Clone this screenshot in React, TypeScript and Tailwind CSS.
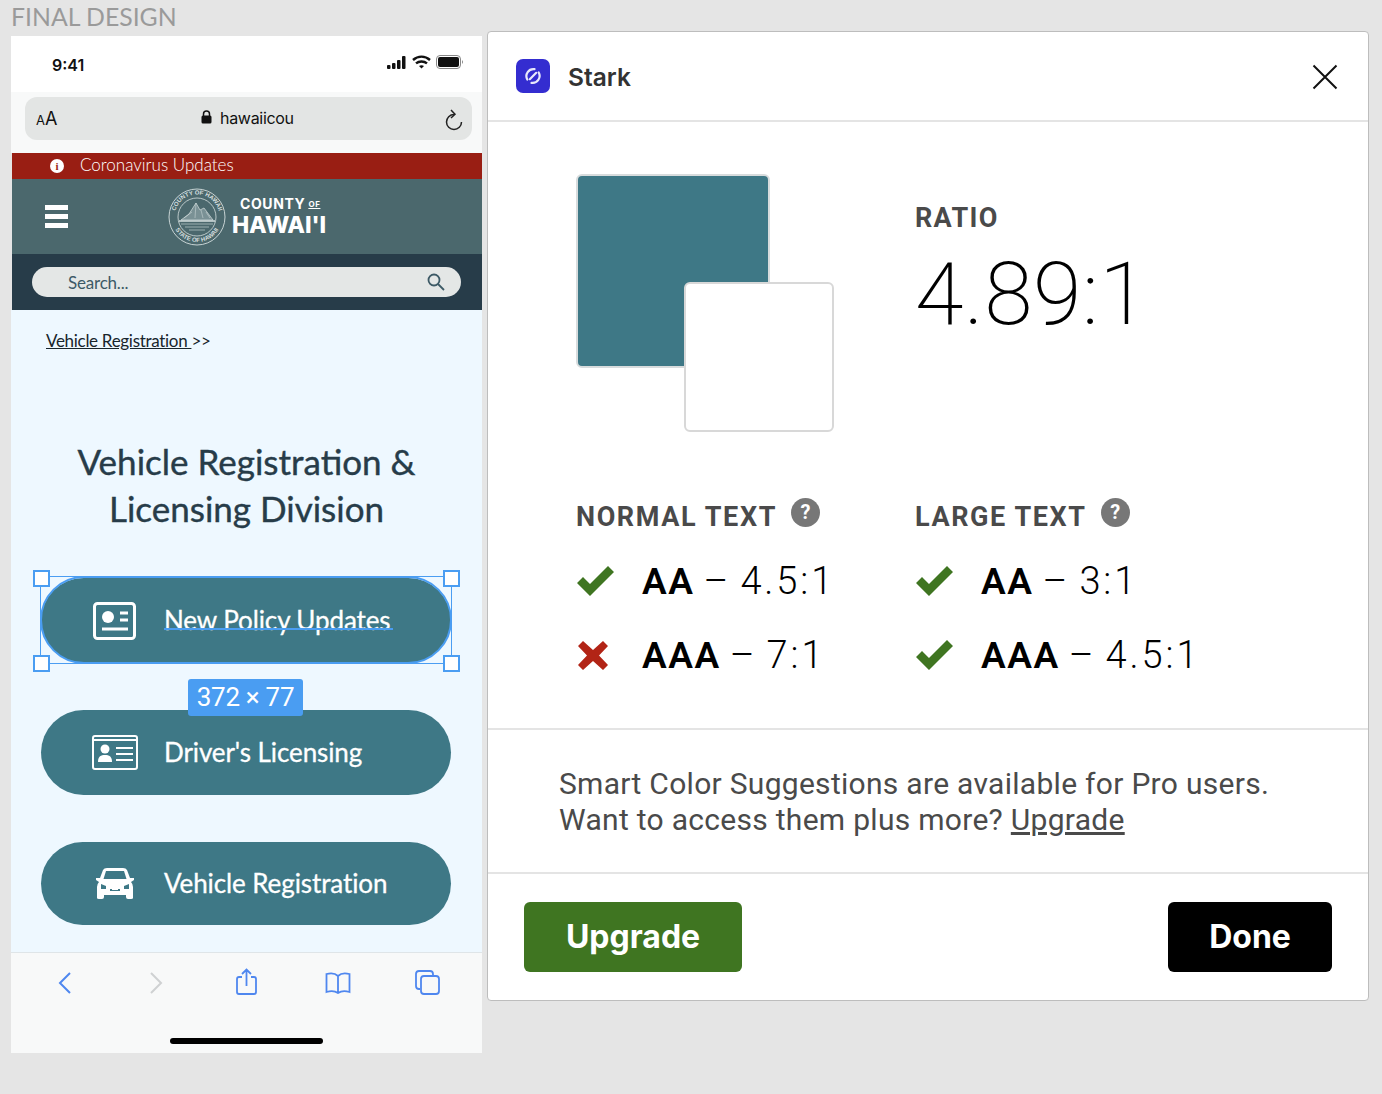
const Check = () => (
  <svg width="39" height="31" viewBox="0 0 39 31" className="shrink-0">
    <path d="M1 17 L7 11 L14 18 L32 0 L38 6 L14 30 Z" fill="#3f7521" />
  </svg>
)

const Cross = () => (
  <svg width="39" height="31" viewBox="0 0 39 31" className="shrink-0">
    <path d="M2 6 L7 1 L17 10 L27 1 L32 6 L23 15.500 L32 25 L27 30 L17 21 L7 30 L2 25 L11 15.500 Z" fill="#b22416" />
  </svg>
)

const Help = () => (
  <span className="flex h-[29px] w-[29px] items-center justify-center rounded-full bg-[#777777] font-['Roboto',sans-serif] text-[20px] font-bold text-white">
    ?
  </span>
)

const Seal = () => (
  <svg width="58" height="58" viewBox="0 0 58 58" fill="none" stroke="#d5dfdf">
    <defs>
      <path id="seal-top" d="M6.500 29 A22.500 22.500 0 0 1 51.500 29" />
      <path id="seal-bottom" d="M4 29 A25 25 0 0 0 54 29" />
    </defs>
    <circle cx="29" cy="29" r="28" strokeWidth="0.900" />
    <circle cx="29" cy="29" r="19" strokeWidth="0.800" />
    <text fontSize="6" fontWeight="700" fill="#d5dfdf" stroke="none" fontFamily="Liberation Sans, sans-serif">
      <textPath href="#seal-top" startOffset="50%" textAnchor="middle">COUNTY OF HAWAII</textPath>
    </text>
    <text fontSize="6" fontWeight="700" fill="#d5dfdf" stroke="none" fontFamily="Liberation Sans, sans-serif">
      <textPath href="#seal-bottom" startOffset="50%" textAnchor="middle">STATE OF HAWAII</textPath>
    </text>
    <path d="M13 32 L21 26 L28 15 L32 22 L36 20 L45 32 Z" fill="#d5dfdf" fillOpacity="0.350" strokeWidth="0.700" />
    <path d="M16 30 L24 24 M28 15 L27 30 M33 22 L35 30 M38 24 L42 30" strokeWidth="0.500" />
    <path d="M11 33 H47" strokeWidth="1.400" />
    <path d="M13 36 H45 M17 39 H41 M21 42 H37" strokeWidth="0.600" />
  </svg>
)

const PolicyIcon = () => (
  <svg width="44" height="38" viewBox="0 0 44 38" fill="none">
    <rect x="1.500" y="1.500" width="40" height="35" rx="3" stroke="white" strokeWidth="3" />
    <circle cx="15" cy="15" r="6" fill="white" />
    <path d="M27 11 H35 M27 18 H35 M9 27 H35" stroke="white" strokeWidth="3" />
  </svg>
)

const LicenseIcon = () => (
  <svg width="46" height="35" viewBox="0 0 46 35" fill="none">
    <rect x="1" y="1" width="44" height="33" rx="2" stroke="white" strokeWidth="2" />
    <path d="M1 5 H45" stroke="white" strokeWidth="2" />
    <circle cx="13" cy="14" r="4.500" fill="white" />
    <path d="M6 27 C6 21 9 20 13 20 C17 20 20 21 20 27 Z" fill="white" />
    <path d="M24 13 H41 M24 19 H41 M24 25 H41" stroke="white" strokeWidth="2" />
  </svg>
)

const CarIcon = () => (
  <svg width="40" height="33" viewBox="0 0 40 33">
    <path
      fillRule="evenodd"
      fill="white"
      d="M8 3 Q9 1 12 1 H28 Q31 1 32 3 L35 11 H39 V13 L36 15 Q38 17 38 20 V31 Q38 32 36 32 H33 Q31 32 31 30 V28 H9 V30 Q9 32 7 32 H4 Q2 32 2 31 V20 Q2 17 4 15 L1 13 V11 H5 Z M11 4 L8.500 12 H31.500 L29 4 Z M6 17 V22 H11 V19 Z M34 17 V22 H29 V19 Z M15 22 V24 H25 V22 H23 V23 H17 V22 Z"
    />
  </svg>
)

const PhoneButton = ({ icon, label, className }: { icon: React.ReactNode; label: string; className: string }) => (
  <div className={`flex w-[410px] items-center rounded-full bg-[#3e7886] ${className}`}>
    <div className="flex w-[123px] shrink-0 justify-center pl-[25px]">{icon}</div>
    <span className="mb-[1px] text-[26px] tracking-[-0.1px] text-white [-webkit-text-stroke:0.3px_white]">{label}</span>
  </div>
)

const Handle = ({ className }: { className: string }) => (
  <span className={`absolute h-[17px] w-[17px] border-[2px] border-[#4a9df2] bg-white ${className}`} />
)

const Phone = () => (
  <div className="flex h-[1017px] w-[471px] flex-col font-['Lato',sans-serif]">
    {/* status bar */}
    <div className="flex h-[56px] items-center justify-between bg-white pl-[41px] pr-[18px]">
      <span className="mt-[2px] font-['Inter',sans-serif] text-[16px] font-semibold text-[#111]">9:41</span>
      <div className="mb-[4px] flex items-center gap-[5px]">
        <svg width="20" height="13" viewBox="0 0 20 13" fill="#111">
          <rect x="0" y="9" width="3.500" height="4" rx="1" />
          <rect x="5" y="7" width="3.500" height="6" rx="1" />
          <rect x="10" y="4" width="3.500" height="9" rx="1" />
          <rect x="15" y="0" width="3.500" height="13" rx="1" />
        </svg>
        <svg width="19" height="14" viewBox="0 0 19 14" fill="none" stroke="#111" strokeWidth="2.400">
          <path d="M1 5 C6 0.500 13 0.500 18 5 M4 8.300 C7 5.800 12 5.800 15 8.300" />
          <path d="M7 11 L9.500 13.500 L12 11 C10.500 10 8.500 10 7 11 Z" fill="#111" stroke="none" />
        </svg>
        <svg width="28" height="14" viewBox="0 0 28 14">
          <rect x="0.500" y="0.500" width="24" height="13" rx="3.500" fill="none" stroke="#888" />
          <rect x="2" y="2" width="21" height="10" rx="2" fill="#111" />
          <path d="M26 5 Q28 7 26 9 Z" fill="#888" />
        </svg>
      </div>
    </div>

    {/* address bar */}
    <div className="flex h-[61px] items-start bg-[#f8f9f9] pl-[14px] pr-[10px] pt-[5px]">
      <div className="flex h-[43px] w-full items-center rounded-[12px] bg-[#e3e5e4] pl-[11px] pr-[8px]">
        <span className="w-[165px] text-[#111] font-['Inter',sans-serif]">
          <span className="text-[13px]">A</span>
          <span className="text-[18px]">A</span>
        </span>
        <svg width="11" height="14" viewBox="0 0 11 14" className="mb-[4px]">
          <path d="M2.500 6 V4 A3 3 0 0 1 8.500 4 V6" fill="none" stroke="#111" strokeWidth="1.500" />
          <rect x="0.500" y="5.500" width="10" height="8" rx="1.500" fill="#111" />
        </svg>
        <span className="mb-[2px] ml-[8px] flex-1 font-['Inter',sans-serif] text-[16px] tracking-[-0.3px] text-[#111]">hawaiicou</span>
        <svg width="20" height="24" viewBox="0 0 20 24" fill="none" stroke="#222" strokeWidth="1.500" className="mt-[2px]">
          <path d="M17.500 14 A7.500 7.500 0 1 1 10 6.500" />
          <path d="M7 2 L11 6.300 L7 10" />
        </svg>
      </div>
    </div>

    {/* corona banner */}
    <div className="ml-[1px] flex h-[26px] items-center bg-[#991e13] pl-[38px] text-white">
      <span className="flex h-[14px] w-[14px] items-center justify-center rounded-full bg-white font-['Liberation_Serif',serif] text-[11px] font-bold text-[#991e13]">
        i
      </span>
      <span className="mb-[2px] ml-[16px] text-[17px] font-light">Coronavirus Updates</span>
    </div>

    {/* county header */}
    <div className="ml-[1px] flex h-[75px] items-center bg-[#4b686d] pl-[33px]">
      <div className="flex w-[23px] flex-col gap-[4px]">
        <span className="h-[5px] bg-white" />
        <span className="h-[5px] bg-white" />
        <span className="h-[5px] bg-white" />
      </div>
      <div className="ml-[100px]">
        <Seal />
      </div>
      <div className="ml-[6px] flex flex-col items-start text-white">
        <div className="flex items-center pl-[8px] font-['Inter',sans-serif] text-[14px] font-bold leading-[16px] tracking-[0.6px]">
          COUNTY <span className="ml-[3px] text-[8px] underline">OF</span>
        </div>
        <div className="font-['Inter',sans-serif] text-[23px] font-extrabold leading-[26px] tracking-[-0.1px]">HAWAI'I</div>
      </div>
    </div>

    {/* search */}
    <div className="ml-[1px] flex h-[56px] items-center bg-[#273c49] pl-[20px] pr-[21px]">
      <div className="flex h-[30px] w-full items-center justify-between rounded-full bg-[#e4e7e6] pl-[36px] pr-[16px]">
        <span className="mt-[2px] text-[17px] tracking-[-0.2px] text-[#3d5a66]">Search...</span>
        <svg width="18" height="18" viewBox="0 0 18 18" fill="none" stroke="#3d5a66" strokeWidth="1.800">
          <circle cx="7" cy="7" r="5.500" />
          <path d="M11 11 L17 17" />
        </svg>
      </div>
    </div>

    {/* page body */}
    <div className="flex h-[642px] flex-col bg-[#eef8ff]">
      <div className="pl-[35px] pt-[21px] text-[17px] leading-[20px] tracking-[-0.3px] text-[#18252c]">
        <span className="underline">Vehicle Registration </span>
        <span>&gt;&gt;</span>
      </div>
      <h1 className="mt-[87px] text-center text-[35px] leading-[47px] text-[#273c49] [-webkit-text-stroke:0.4px_#273c49]">
        Vehicle Registration &amp;
        <br />
        Licensing Division
      </h1>
      <div className="mt-[46px] flex flex-col pl-[30px]">
        <div className="relative">
          <PhoneButton icon={<PolicyIcon />} label="New Policy Updates" className="h-[85px]" />
          <span className="absolute left-[123px] top-[50px] h-[2px] w-[229px] bg-[#4a9df2]" />
          {/* selection frame */}
          <span className="absolute left-[-1px] top-[-2px] h-[88px] w-[412px] rounded-[44px] border-[2px] border-[#4a9df2]" />
          <span className="absolute left-[-1px] top-[-2px] h-[88px] w-[412px] border-[1px] border-[#4a9df2]" />
          <Handle className="left-[-8px] top-[-8px]" />
          <Handle className="left-[402px] top-[-8px]" />
          <Handle className="left-[-8px] top-[77px]" />
          <Handle className="left-[402px] top-[77px]" />
          <span className="absolute left-[147px] top-[101px] z-10 flex h-[37px] w-[115px] items-center justify-center rounded-[3px] bg-[#4a9df2] font-['Roboto',sans-serif] text-[26px] tracking-[-0.3px] text-white">
            372 × 77
          </span>
        </div>
        <PhoneButton icon={<LicenseIcon />} label="Driver's Licensing" className="mt-[47px] h-[85px]" />
        <PhoneButton icon={<CarIcon />} label="Vehicle Registration" className="mt-[47px] h-[83px]" />
      </div>
    </div>

    {/* safari toolbar */}
    <div className="relative flex h-[101px] items-start border-t border-[#dfe5e8] bg-[#f8f9f9] pl-[47px] pt-[15px]">
      <svg width="13" height="22" viewBox="0 0 13 22" fill="none" stroke="#4f87ef" strokeWidth="2" className="mt-[4px]">
        <path d="M12 1 L2 11 L12 21" />
      </svg>
      <svg width="13" height="22" viewBox="0 0 13 22" fill="none" stroke="#cfd1d2" strokeWidth="2" className="ml-[79px] mt-[4px]">
        <path d="M1 1 L11 11 L1 21" />
      </svg>
      <svg width="21" height="27" viewBox="0 0 21 27" fill="none" stroke="#4f87ef" strokeWidth="1.800" className="ml-[73px]">
        <path d="M6 9 H3 Q1 9 1 11 V24 Q1 26 3 26 H18 Q20 26 20 24 V11 Q20 9 18 9 H15" />
        <path d="M10.500 18 V1.500 M6 6 L10.500 1.500 L15 6" />
      </svg>
      <svg width="26" height="22" viewBox="0 0 26 22" fill="none" stroke="#4f87ef" strokeWidth="1.800" className="ml-[68px] mt-[4px]">
        <path d="M13 4 C10 1 5 1 1.500 2 V20 C5 19 10 19 13 21 C16 19 21 19 24.500 20 V2 C21 1 16 1 13 4 Z M13 4 V21" />
      </svg>
      <svg width="25" height="25" viewBox="0 0 25 25" fill="none" stroke="#4f87ef" strokeWidth="1.800" className="ml-[64px] mt-[2px]">
        <path d="M5 19 H4 Q1 19 1 16 V4 Q1 1 4 1 H15 Q18 1 18 4 V6" />
        <rect x="6" y="6" width="18" height="18" rx="3" />
      </svg>
      <span className="absolute bottom-[9px] left-[159px] h-[6px] w-[153px] rounded-full bg-black" />
    </div>
  </div>
)

const ResultRow = ({ pass, level, ratio }: { pass: boolean; level: string; ratio: string }) => (
  <div className="flex h-[74px] items-center">
    {pass ? <Check /> : <Cross />}
    <span className="ml-[27px] whitespace-nowrap text-[38px] text-black">
      <b className="text-[37px] font-semibold tracking-[1.500px]">{level}</b>
      <span className="font-light tracking-[2.900px] [word-spacing:-3px]"> – {ratio}</span>
    </span>
  </div>
)

const TextGroup = ({ title, children }: { title: string; children: React.ReactNode }) => (
  <div>
    <div className="mb-[15px] flex h-[34px] items-center gap-[14px]">
      <span className="mt-[10px] text-[27px] font-bold leading-[32px] tracking-[1.600px] text-[#4a4a4a]">{title}</span>
      <Help />
    </div>
    {children}
  </div>
)

const StarkPanel = () => (
  <div className="mt-[31px] flex h-[970px] w-[882px] flex-col rounded-[4px] border border-[#bdbdbd] bg-white font-['Roboto',sans-serif]">
    <div className="flex h-[90px] shrink-0 items-center justify-between border-b-2 border-[#e4e4e4] pl-[28px] pr-[30px]">
      <div className="flex items-center">
        <span className="flex h-[34px] w-[34px] items-center justify-center rounded-[7px] bg-[#342dd0]">
          <svg width="18" height="18" viewBox="0 0 18 18" fill="none" stroke="#e8e8fb" strokeWidth="2.200" strokeLinecap="round">
            <path d="M10.500 2.200 A7 7 0 0 0 3.300 12.500" />
            <path d="M7.500 15.800 A7 7 0 0 0 14.700 5.500" />
            <path d="M5.800 12.200 L12.200 5.800" />
          </svg>
        </span>
        <span className="ml-[18px] mt-[2px] font-['Inter',sans-serif] text-[24.500px] font-semibold text-[#333]">Stark</span>
      </div>
      <svg width="26" height="26" viewBox="0 0 26 26" stroke="#111" strokeWidth="2" fill="none" className="mt-[1px]">
        <path d="M1.500 1.500 L24.500 24.500 M24.500 1.500 L1.500 24.500" />
      </svg>
    </div>

    <div className="flex h-[608px] shrink-0 flex-col border-b-2 border-[#e4e4e4] pl-[88px]">
      <div className="mt-[52px] flex">
        <div className="relative h-[257px] w-[339px] shrink-0">
          <div className="h-[194px] w-[194px] rounded-[6px] border-2 border-[#d8dcdd] bg-[#3e7886]" />
          <div className="absolute left-[108px] top-[108px] h-[150px] w-[150px] rounded-[6px] border-2 border-[#d8d8d8] bg-white" />
        </div>
        <div className="flex flex-col">
          <span className="mt-[28px] text-[27px] font-bold leading-[32px] tracking-[1.300px] text-[#4a4a4a]">RATIO</span>
          <span className="mt-[10px] text-[88px] font-extralight leading-[100px] tracking-[0.5px] text-black">4.89:1</span>
        </div>
      </div>
      <div className="mt-[64px] grid grid-cols-[339px_1fr]">
        <TextGroup title="NORMAL TEXT">
          <ResultRow pass level="AA" ratio="4.5:1" />
          <ResultRow pass={false} level="AAA" ratio="7:1" />
        </TextGroup>
        <TextGroup title="LARGE TEXT">
          <ResultRow pass level="AA" ratio="3:1" />
          <ResultRow pass level="AAA" ratio="4.5:1" />
        </TextGroup>
      </div>
    </div>

    <div className="flex h-[144px] shrink-0 flex-col justify-center border-b-2 border-[#e4e4e4] pl-[71px] pt-[2px] text-[30px] leading-[36px] tracking-[0.29px] text-[#4a4a4a]">
      <p>Smart Color Suggestions are available for Pro users.</p>
      <p>
        Want to access them plus more? <span className="underline">Upgrade</span>
      </p>
    </div>

    <div className="flex flex-1 items-center justify-between px-[36px] font-['Inter',sans-serif]">
      <button className="h-[70px] w-[218px] rounded-[6px] bg-[#3f7521] text-[32px] font-bold text-white">Upgrade</button>
      <button className="h-[70px] w-[164px] rounded-[6px] bg-black text-[32px] font-bold text-white">Done</button>
    </div>
  </div>
)

export default function App() {
  return (
    <div className="flex h-[1094px] w-[1382px] overflow-hidden bg-[#e5e5e5] pl-[11px]">
      <div className="flex w-[471px] shrink-0 flex-col">
        <div className="h-[36px] font-['Lato',sans-serif] text-[24.800px] leading-[34px] text-[#9a9a9a]">FINAL DESIGN</div>
        <Phone />
      </div>
      <div className="ml-[5px]">
        <StarkPanel />
      </div>
    </div>
  )
}
